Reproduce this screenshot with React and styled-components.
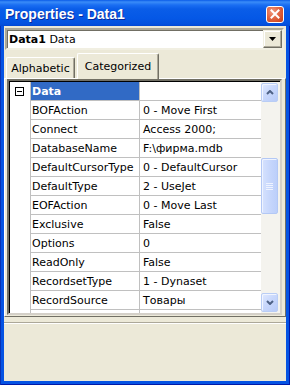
import React from "react";
import styled, { createGlobalStyle } from "styled-components";

const Global = createGlobalStyle`
  html, body { margin: 0; padding: 0; background: #ece9d8; }
  body { font-family: "DejaVu Sans", Tahoma, sans-serif; font-size: 11px; color: #000; }
  * { box-sizing: border-box; }
`;

const Window = styled.div`
  width: 290px;
  height: 385px;
  display: flex;
  flex-direction: column;
  background: #0553e3;
  box-shadow: inset 1px 0 0 #0831b5, inset -1px 0 0 #0019a8, inset 0 -1px 0 #0019a8;
  overflow: hidden;
`;

const TitleBar = styled.div`
  height: 26px;
  flex: none;
  display: flex;
  align-items: center;
  justify-content: space-between;
  padding: 1px 6px 0 5px;
  background: linear-gradient(
    to bottom,
    #0a5be8 0px,
    #3a8cf8 2px,
    #1a6ef2 5px,
    #0a5de8 9px,
    #0558e6 18px,
    #0451de 24px,
    #0348d3 26px
  );
`;

const Title = styled.span`
  font-family: "Liberation Sans", Arial, sans-serif;
  font-weight: bold;
  font-size: 14px;
  color: #fff;
  text-shadow: 1px 1px 0 #0a2a9c;
  letter-spacing: 0;
`;

const CloseButton = styled.div`
  width: 18px;
  height: 17px;
  margin-top: 1px;
  border: 1px solid #fff;
  border-radius: 3px;
  background: radial-gradient(circle at 35% 30%, #f09a7f 0%, #e36a48 40%, #d24a24 80%, #c0401c 100%);
  display: flex;
  align-items: center;
  justify-content: center;
`;

const Client = styled.div`
  flex: 1;
  margin: 0 4px 4px 4px;
  background: #ece9d8;
  display: flex;
  flex-direction: column;
  padding-top: 2px;
`;

const Combo = styled.div`
  height: 22px;
  margin: 0 2px 0 1px;
  display: flex;
  align-items: stretch;
  background: #fff;
  border-style: solid;
  border-width: 2px;
  border-color: #aca899 #f1efe2 #f1efe2 #aca899;
  box-shadow: inset 1px 1px 0 #716f64;
`;

const ComboText = styled.div`
  flex: 1;
  display: flex;
  align-items: center;
  padding-left: 2px;
  white-space: pre;
  b { font-weight: bold; }
`;

const DropButton = styled.div`
  width: 19px;
  background: #ece9d8;
  border-style: solid;
  border-width: 1px;
  border-color: #f1efe2 #716f64 #716f64 #f1efe2;
  box-shadow: inset -1px -1px 0 #aca899, inset 1px 1px 0 #fff;
  display: flex;
  align-items: center;
  justify-content: center;
`;

const TabStrip = styled.div`
  height: 25px;
  margin-top: 3px;
  display: flex;
  align-items: flex-end;
  gap: 2px;
  padding-left: 2px;
`;

const Tab = styled.div`
  height: ${(p) => (p.$active ? 26 : 21)}px;
  width: ${(p) => p.$w}px;
  display: flex;
  align-items: center;
  justify-content: center;
  padding-top: ${(p) => (p.$active ? 0 : 1)}px;
  background: #ece9d8;
  border-top: 1px solid #fff;
  border-left: 1px solid #fff;
  border-right: 1px solid #716f64;
  box-shadow: inset -1px 0 0 #aca899;
  border-radius: 2px 2px 0 0;
  margin-bottom: ${(p) => (p.$active ? -1 : 0)}px;
  position: relative;
  z-index: ${(p) => (p.$active ? 1 : 0)};
`;

const TabPanel = styled.div`
  border-top: 1px solid #fff;
  border-left: 1px solid #fff;
  border-right: 1px solid #716f64;
  border-bottom: 1px solid #716f64;
  padding: 0 3px 1px 2px;
`;

const Grid = styled.div`
  height: 236px;
  display: flex;
  background: #fff;
  border-style: solid;
  border-width: 2px;
  border-color: #716f64 #d4d0c8 #d4d0c8 #716f64;
  box-shadow: inset 1px 1px 0 #000;
  overflow: hidden;
  padding: 1px 0 0 1px;
`;

const Rows = styled.div`
  flex: 1;
  display: flex;
  flex-direction: column;
  overflow: hidden;
`;

const Row = styled.div`
  height: 19px;
  flex: none;
  display: flex;
`;

const Gutter = styled.div`
  width: 21px;
  flex: none;
  border-right: 1px solid #c0c0c0;
  display: flex;
  justify-content: center;
  padding: 5px 1px 0 0;
`;

const ExpandBox = styled.div`
  width: 9px;
  height: 9px;
  border: 1px solid #000;
  display: flex;
  align-items: center;
  justify-content: center;
  &::after {
    content: "";
    width: 5px;
    height: 1px;
    background: #000;
  }
`;

const NameCell = styled.div`
  width: 109px;
  flex: none;
  border-right: 1px solid #c0c0c0;
  border-bottom: 1px solid #c0c0c0;
  padding-left: 1px;
  display: flex;
  align-items: center;
  white-space: nowrap;
  overflow: hidden;
  background: ${(p) => (p.$selected ? "#316ac5" : "#fff")};
  color: ${(p) => (p.$selected ? "#fff" : "#000")};
  font-weight: ${(p) => (p.$selected ? "bold" : "normal")};
`;

const ValueCell = styled.div`
  flex: 1;
  border-bottom: 1px solid #c0c0c0;
  padding-left: 3px;
  display: flex;
  align-items: center;
  white-space: nowrap;
  overflow: hidden;
`;

const ScrollBar = styled.div`
  width: 19px;
  flex: none;
  background: #f4f3ee;
  display: flex;
  flex-direction: column;
  padding: 1px 2px 1px 0;
`;

const ScrollBtn = styled.div`
  height: 19px;
  flex: none;
  border: 1px solid #b9cdf5;
  border-radius: 2px;
  background: linear-gradient(135deg, #e0e9fe 0%, #c9d8fc 45%, #b8cbf8 100%);
  box-shadow: inset 1px 1px 0 #f1f5ff;
  display: flex;
  align-items: center;
  justify-content: center;
`;

const Track = styled.div`
  flex: 1;
  display: flex;
  flex-direction: column;
`;

const Thumb = styled.div`
  height: 56px;
  margin-top: ${(p) => p.$offset}px;
  border: 1px solid #b3c8f5;
  border-radius: 2px;
  background: linear-gradient(to right, #d6e2fe 0%, #c7d7fc 50%, #bccffa 100%);
  box-shadow: inset 1px 1px 0 #eef3ff;
  display: flex;
  align-items: center;
  justify-content: center;
`;

const Description = styled.div`
  flex: 1;
  margin-top: 5px;
  border-top: 1px solid #aca899;
  box-shadow: inset 0 1px 0 #fff;
`;

const rows = [
  ["BOFAction", "0 - Move First"],
  ["Connect", "Access 2000;"],
  ["DatabaseName", "F:\\фирма.mdb"],
  ["DefaultCursorType", "0 - DefaultCursor"],
  ["DefaultType", "2 - UseJet"],
  ["EOFAction", "0 - Move Last"],
  ["Exclusive", "False"],
  ["Options", "0"],
  ["ReadOnly", "False"],
  ["RecordsetType", "1 - Dynaset"],
  ["RecordSource", "Товары"],
];

export default function App() {
  return (
    <>
      <Global />
      <Window>
        <TitleBar>
          <Title>Properties - Data1</Title>
          <CloseButton>
            <svg width="10" height="10" viewBox="0 0 10 10">
              <path d="M1.5 1.5 L8.5 8.5 M8.5 1.5 L1.5 8.5" stroke="#fff" strokeWidth="2" strokeLinecap="square" />
            </svg>
          </CloseButton>
        </TitleBar>
        <Client>
          <Combo>
            <ComboText>
              <b>Data1</b> Data
            </ComboText>
            <DropButton>
              <svg width="7" height="4" viewBox="0 0 7 4">
                <path d="M0 0 H7 L3.5 4 Z" fill="#000" />
              </svg>
            </DropButton>
          </Combo>
          <TabStrip>
            <Tab $w={69}>Alphabetic</Tab>
            <Tab $w={82} $active>
              Categorized
            </Tab>
          </TabStrip>
          <TabPanel>
            <Grid>
              <Rows>
                <Row>
                  <Gutter>
                    <ExpandBox />
                  </Gutter>
                  <NameCell $selected>Data</NameCell>
                  <ValueCell />
                </Row>
                {rows.map(([n, v]) => (
                  <Row key={n}>
                    <Gutter />
                    <NameCell>{n}</NameCell>
                    <ValueCell>{v}</ValueCell>
                  </Row>
                ))}
                <Row>
                  <Gutter>
                    <ExpandBox />
                  </Gutter>
                  <NameCell />
                  <ValueCell />
                </Row>
              </Rows>
              <ScrollBar>
                <ScrollBtn>
                  <svg width="8" height="5" viewBox="0 0 8 5">
                    <path d="M1 4 L4 1 L7 4" stroke="#4d6185" strokeWidth="2" fill="none" />
                  </svg>
                </ScrollBtn>
                <Track>
                  <Thumb $offset={56}>
                    <svg width="7" height="7" viewBox="0 0 7 7">
                      <path d="M0 0.5 H7 M0 2.5 H7 M0 4.5 H7 M0 6.5 H7" stroke="#eef3ff" strokeWidth="1" />
                    </svg>
                  </Thumb>
                </Track>
                <ScrollBtn>
                  <svg width="8" height="5" viewBox="0 0 8 5">
                    <path d="M1 1 L4 4 L7 1" stroke="#4d6185" strokeWidth="2" fill="none" />
                  </svg>
                </ScrollBtn>
              </ScrollBar>
            </Grid>
          </TabPanel>
          <Description />
        </Client>
      </Window>
    </>
  );
}
